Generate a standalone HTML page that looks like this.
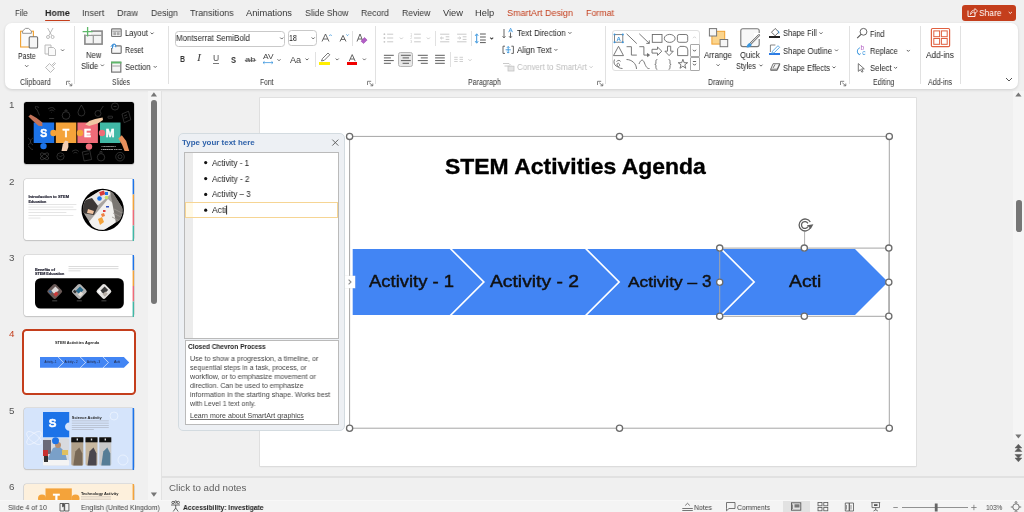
<!DOCTYPE html><html><head><meta charset="utf-8"><style>html,body{margin:0;padding:0;width:1024px;height:512px;overflow:hidden;background:#f0f0f0;position:relative;font-family:"Liberation Sans",sans-serif}svg{overflow:visible}</style></head><body><div style="position:absolute;left:14.6px;top:9.33px;font-family:'Liberation Sans',sans-serif;font-size:9.3px;line-height:1;white-space:pre;will-change:transform;color:#363636;font-weight:400;transform:scaleX(0.8475);transform-origin:0 0;">File</div><div style="position:absolute;left:45px;top:9.33px;font-family:'Liberation Sans',sans-serif;font-size:9.3px;line-height:1;white-space:pre;will-change:transform;color:#242424;font-weight:700;transform:scaleX(0.9557);transform-origin:0 0;">Home</div><div style="position:absolute;left:82.2px;top:9.33px;font-family:'Liberation Sans',sans-serif;font-size:9.3px;line-height:1;white-space:pre;will-change:transform;color:#363636;font-weight:400;transform:scaleX(0.9585);transform-origin:0 0;">Insert</div><div style="position:absolute;left:117px;top:9.33px;font-family:'Liberation Sans',sans-serif;font-size:9.3px;line-height:1;white-space:pre;will-change:transform;color:#363636;font-weight:400;transform:scaleX(0.9676);transform-origin:0 0;">Draw</div><div style="position:absolute;left:151px;top:9.33px;font-family:'Liberation Sans',sans-serif;font-size:9.3px;line-height:1;white-space:pre;will-change:transform;color:#363636;font-weight:400;transform:scaleX(0.9325);transform-origin:0 0;">Design</div><div style="position:absolute;left:190.4px;top:9.33px;font-family:'Liberation Sans',sans-serif;font-size:9.3px;line-height:1;white-space:pre;will-change:transform;color:#363636;font-weight:400;transform:scaleX(0.9662);transform-origin:0 0;">Transitions</div><div style="position:absolute;left:246.3px;top:9.33px;font-family:'Liberation Sans',sans-serif;font-size:9.3px;line-height:1;white-space:pre;will-change:transform;color:#363636;font-weight:400;transform:scaleX(0.9935);transform-origin:0 0;">Animations</div><div style="position:absolute;left:304.5px;top:9.33px;font-family:'Liberation Sans',sans-serif;font-size:9.3px;line-height:1;white-space:pre;will-change:transform;color:#363636;font-weight:400;transform:scaleX(0.9352);transform-origin:0 0;">Slide Show</div><div style="position:absolute;left:361px;top:9.33px;font-family:'Liberation Sans',sans-serif;font-size:9.3px;line-height:1;white-space:pre;will-change:transform;color:#363636;font-weight:400;transform:scaleX(0.9338);transform-origin:0 0;">Record</div><div style="position:absolute;left:402px;top:9.33px;font-family:'Liberation Sans',sans-serif;font-size:9.3px;line-height:1;white-space:pre;will-change:transform;color:#363636;font-weight:400;transform:scaleX(0.9316);transform-origin:0 0;">Review</div><div style="position:absolute;left:443px;top:9.33px;font-family:'Liberation Sans',sans-serif;font-size:9.3px;line-height:1;white-space:pre;will-change:transform;color:#363636;font-weight:400;transform:scaleX(1.0008);transform-origin:0 0;">View</div><div style="position:absolute;left:475px;top:9.33px;font-family:'Liberation Sans',sans-serif;font-size:9.3px;line-height:1;white-space:pre;will-change:transform;color:#363636;font-weight:400;transform:scaleX(0.9935);transform-origin:0 0;">Help</div><div style="position:absolute;left:507px;top:9.33px;font-family:'Liberation Sans',sans-serif;font-size:9.3px;line-height:1;white-space:pre;will-change:transform;color:#c43e1c;font-weight:400;transform:scaleX(0.9677);transform-origin:0 0;">SmartArt Design</div><div style="position:absolute;left:586px;top:9.33px;font-family:'Liberation Sans',sans-serif;font-size:9.3px;line-height:1;white-space:pre;will-change:transform;color:#c43e1c;font-weight:400;transform:scaleX(0.9507);transform-origin:0 0;">Format</div><div style="position:absolute;left:45px;top:19.6px;width:25px;height:1.7px;background:#c43e1c;border-radius:1px"></div><div style="position:absolute;left:962px;top:5px;width:54px;height:16px;background:#c43e1c;border-radius:3px"></div><div style="position:absolute;left:978.5px;top:7.96px;font-family:'Liberation Sans',sans-serif;font-size:9.5px;line-height:1;white-space:pre;will-change:transform;color:#ffffff;font-weight:400;transform:scaleX(0.8872);transform-origin:0 0;">Share</div><svg style="position:absolute;left:0px;top:0px;" width="1024" height="30" viewBox="0 0 1024 30"><path d="M968 10.5v6h7v-3.5" fill="none" stroke="#fff" stroke-width="0.9"/><path d="M970.5 14.5c0-3 2-4.5 4.5-4.5V8.5l2.5 2.5-2.5 2.5V12c-2 0-3.5.8-4.5 2.5z" fill="none" stroke="#fff" stroke-width="0.8"/><path d="M1008.7 12l1.6 1.5 1.6-1.5" fill="none" stroke="#fff" stroke-width="0.9"/></svg><div style="position:absolute;left:5px;top:23px;width:1013px;height:66px;background:#fff;border-radius:7px;box-shadow:0 1px 3px rgba(0,0,0,0.14)"></div><svg style="position:absolute;left:0px;top:0px;" width="1024" height="100" viewBox="0 0 1024 100"><rect x="20.6" y="31.2" width="12.8" height="15.8" fill="#fafafa" stroke="#f0a030" stroke-width="1.1"/><path d="M22.6 33.3L22.6 31L25.5 28.4L28.5 28.4L31.4 31L31.4 33.3Z" fill="#fff" stroke="#8a8a8a" stroke-width="0.9"/><rect x="29.2" y="36.7" width="8.4" height="11.3" rx="1" fill="#f6f6f6" stroke="#6e6e6e" stroke-width="1.1"/><path d="M25.099999999999998 65.2L26.7 66.8L28.3 65.2" fill="none" stroke="#555" stroke-width="0.9"/><g fill="none" stroke="#b4b4b4" stroke-width="0.9"><circle cx="48" cy="37" r="1.5"/><circle cx="52.6" cy="37" r="1.5"/><path d="M48.8 35.7L53 28M51.8 35.7L47.6 28"/></g><g fill="#fafafa" stroke="#b4b4b4" stroke-width="0.9"><path d="M45 45h6v9h-6z"/><path d="M48.5 47.5h5l2 2v6h-7z"/></g><path d="M61.1 49.45L62.6 50.95L64.1 49.45" fill="none" stroke="#555" stroke-width="0.9"/><g fill="#fafafa" stroke="#b4b4b4" stroke-width="0.9"><path d="M45.5 67.5l4-4 5 5-4 4z"/><path d="M51.5 65.5l3-3 1 1-3 3"/></g><g fill="none" stroke="#666" stroke-width="0.8"><path d="M66.5 85V81.3h3.7"/><path d="M68.3 82.8l3.5 3M71.8 83.5v2.3h-2.3"/></g><g fill="#f4f4f4" stroke="#888" stroke-width="1.6"><rect x="84.9" y="31.1" width="17.2" height="13"/></g><path d="M85 35.3h17M93.3 35.3v9" stroke="#9a9a9a" stroke-width="1.2"/><rect x="82" y="29.5" width="9" height="5" fill="#fff"/><path d="M82.6 31.6h10M87.6 27v9.6" stroke="#5fb86a" stroke-width="1.3"/><path d="M100.9 64.55L102.4 66.05L103.9 64.55" fill="none" stroke="#555" stroke-width="0.9"/><rect x="111.6" y="28.9" width="9.6" height="7.6" rx="0.8" fill="#f6f6f6" stroke="#777" stroke-width="1.2"/><path d="M112.5 31.2h8" stroke="#888" stroke-width="0.9"/><rect x="113.3" y="32.2" width="2.8" height="3" fill="#aaa"/><rect x="116.8" y="32.2" width="2.8" height="3" fill="#aaa"/><path d="M150.6 32.55L152.1 34.05L153.6 32.55" fill="none" stroke="#555" stroke-width="0.9"/><rect x="111.6" y="45.8" width="9.6" height="7.6" rx="0.8" fill="#f6f6f6" stroke="#777" stroke-width="1.2"/><rect x="110.5" y="44" width="5" height="4" fill="#fff"/><path d="M112.5 48.5v-2.8a1.6 1.6 0 0 1 3.2 0v1.5" fill="none" stroke="#3c8fd8" stroke-width="1.1"/><path d="M110.8 46.8l1.7-2 1.7 2" fill="none" stroke="#3c8fd8" stroke-width="1"/><rect x="111.6" y="62.3" width="9.2" height="9.8" fill="#f6f6f6" stroke="#777" stroke-width="1.2"/><rect x="111" y="61.6" width="10.4" height="1.9" fill="#5fb86a"/><path d="M112.3 66h8" stroke="#999" stroke-width="0.9"/><path d="M153.7 66.05L155.2 67.55L156.7 66.05" fill="none" stroke="#555" stroke-width="0.9"/></svg><div style="position:absolute;left:18.4px;top:51.92px;font-family:'Liberation Sans',sans-serif;font-size:8.6px;line-height:1;white-space:pre;will-change:transform;color:#222;font-weight:400;transform:scaleX(0.8006);transform-origin:0 0;">Paste</div><div style="position:absolute;left:85.6px;top:50.92px;font-family:'Liberation Sans',sans-serif;font-size:8.6px;line-height:1;white-space:pre;will-change:transform;color:#222;font-weight:400;transform:scaleX(0.8894);transform-origin:0 0;">New</div><div style="position:absolute;left:80.5px;top:61.52px;font-family:'Liberation Sans',sans-serif;font-size:8.6px;line-height:1;white-space:pre;will-change:transform;color:#222;font-weight:400;transform:scaleX(0.9053);transform-origin:0 0;">Slide</div><div style="position:absolute;left:124.7px;top:29.02px;font-family:'Liberation Sans',sans-serif;font-size:8.6px;line-height:1;white-space:pre;will-change:transform;color:#222;font-weight:400;transform:scaleX(0.8872);transform-origin:0 0;">Layout</div><div style="position:absolute;left:124.7px;top:46.22px;font-family:'Liberation Sans',sans-serif;font-size:8.6px;line-height:1;white-space:pre;will-change:transform;color:#222;font-weight:400;transform:scaleX(0.8150);transform-origin:0 0;">Reset</div><div style="position:absolute;left:124.7px;top:63.02px;font-family:'Liberation Sans',sans-serif;font-size:8.6px;line-height:1;white-space:pre;will-change:transform;color:#222;font-weight:400;transform:scaleX(0.8929);transform-origin:0 0;">Section</div><div style="position:absolute;left:174.5px;top:30.5px;width:110.9px;height:16px;box-sizing:border-box;border:1px solid #c9c9c9;border-radius:3.5px;background:#fff"></div><div style="position:absolute;left:287.6px;top:30.3px;width:29.4px;height:16px;box-sizing:border-box;border:1px solid #c9c9c9;border-radius:3.5px;background:#fff"></div><div style="position:absolute;left:176.4px;top:34.44px;font-family:'Liberation Sans',sans-serif;font-size:8.7px;line-height:1;white-space:pre;will-change:transform;color:#222;font-weight:400;transform:scaleX(0.9109);transform-origin:0 0;">Montserrat SemiBold</div><div style="position:absolute;left:289.2px;top:34.24px;font-family:'Liberation Sans',sans-serif;font-size:8.7px;line-height:1;white-space:pre;will-change:transform;color:#222;font-weight:400;transform:scaleX(0.8168);transform-origin:0 0;">18</div><div style="position:absolute;left:352.4px;top:30.7px;width:0.8px;height:15px;background:#e1e1e1"></div><div style="position:absolute;left:179.8px;top:54.34px;font-family:'Liberation Sans',sans-serif;font-size:9.4px;line-height:1;white-space:pre;will-change:transform;color:#333;font-weight:700;transform:scaleX(0.7373);transform-origin:0 0;">B</div><div style="position:absolute;left:197.3px;top:54.34px;font-family:'Liberation Serif',serif;font-size:9.4px;line-height:1;white-space:pre;will-change:transform;color:#444;font-weight:400;transform:scaleX(1.2800);transform-origin:0 0;font-style:italic;">I</div><div style="position:absolute;left:212.8px;top:54.38px;font-family:'Liberation Sans',sans-serif;font-size:9px;line-height:1;white-space:pre;will-change:transform;color:#444;font-weight:400;transform:scaleX(0.9231);transform-origin:0 0;">U</div><div style="position:absolute;left:230.6px;top:54.54px;font-family:'Liberation Sans',sans-serif;font-size:9.4px;line-height:1;white-space:pre;will-change:transform;color:#333;font-weight:700;transform:scaleX(0.7980);transform-origin:0 0;">S</div><div style="position:absolute;left:245.2px;top:56.15px;font-family:'Liberation Sans',sans-serif;font-size:7.5px;line-height:1;white-space:pre;will-change:transform;color:#444;font-weight:400;transform:scaleX(1.2584);transform-origin:0 0;">ab</div><div style="position:absolute;left:262.6px;top:53.43px;font-family:'Liberation Sans',sans-serif;font-size:8px;line-height:1;white-space:pre;will-change:transform;color:#444;font-weight:400;transform:scaleX(1.0419);transform-origin:0 0;">AV</div><div style="position:absolute;left:290.1px;top:55.72px;font-family:'Liberation Sans',sans-serif;font-size:8.6px;line-height:1;white-space:pre;will-change:transform;color:#444;font-weight:400;transform:scaleX(1.0651);transform-origin:0 0;">Aa</div><div style="position:absolute;left:315.4px;top:52.2px;width:0.8px;height:15px;background:#e1e1e1"></div><div style="position:absolute;left:319.2px;top:62.1px;width:10.9px;height:2.8px;background:#ffee00"></div><div style="position:absolute;left:346.8px;top:62.1px;width:10.3px;height:2.8px;background:#f00000"></div><div style="position:absolute;left:435.4px;top:30.7px;width:0.8px;height:15px;background:#e1e1e1"></div><div style="position:absolute;left:471.4px;top:30.7px;width:0.8px;height:15px;background:#e1e1e1"></div><div style="position:absolute;left:398.2px;top:51.5px;width:15.2px;height:15.8px;box-sizing:border-box;border:1px solid #b5b5b5;border-radius:2.5px;background:#e8e8e8"></div><div style="position:absolute;left:449.5px;top:52.4px;width:0.8px;height:14.6px;background:#e1e1e1"></div><div style="position:absolute;left:516.5px;top:29.02px;font-family:'Liberation Sans',sans-serif;font-size:8.6px;line-height:1;white-space:pre;will-change:transform;color:#222;font-weight:400;transform:scaleX(0.9335);transform-origin:0 0;">Text Direction</div><div style="position:absolute;left:516.5px;top:46.02px;font-family:'Liberation Sans',sans-serif;font-size:8.6px;line-height:1;white-space:pre;will-change:transform;color:#222;font-weight:400;transform:scaleX(0.9324);transform-origin:0 0;">Align Text</div><div style="position:absolute;left:516.5px;top:63.12px;font-family:'Liberation Sans',sans-serif;font-size:8.6px;line-height:1;white-space:pre;will-change:transform;color:#bdbdbd;font-weight:400;transform:scaleX(0.9218);transform-origin:0 0;">Convert to SmartArt</div><div style="position:absolute;left:611.9px;top:30.4px;width:87.7px;height:41px;box-sizing:border-box;border:1px solid #e0e0e0;border-radius:3px;background:#fff"></div><div style="position:absolute;left:689.5px;top:44px;width:10.1px;height:13px;box-sizing:border-box;border:1px solid #a8a8a8;border-radius:1px;background:#fff"></div><div style="position:absolute;left:689.5px;top:57.2px;width:10.1px;height:14.2px;box-sizing:border-box;border:1px solid #a8a8a8;border-radius:1px;background:#fff"></div><div style="position:absolute;left:704.1px;top:51.12px;font-family:'Liberation Sans',sans-serif;font-size:8.6px;line-height:1;white-space:pre;will-change:transform;color:#222;font-weight:400;transform:scaleX(0.9124);transform-origin:0 0;">Arrange</div><div style="position:absolute;left:740.4px;top:51.42px;font-family:'Liberation Sans',sans-serif;font-size:8.6px;line-height:1;white-space:pre;will-change:transform;color:#222;font-weight:400;transform:scaleX(0.8922);transform-origin:0 0;">Quick</div><div style="position:absolute;left:736.1px;top:62.02px;font-family:'Liberation Sans',sans-serif;font-size:8.6px;line-height:1;white-space:pre;will-change:transform;color:#222;font-weight:400;transform:scaleX(0.8502);transform-origin:0 0;">Styles</div><div style="position:absolute;left:769.1px;top:36.2px;width:10.6px;height:1.9px;background:#222"></div><div style="position:absolute;left:769.1px;top:53px;width:10.6px;height:2px;background:#2c7be5"></div><div style="position:absolute;left:782.7px;top:29.12px;font-family:'Liberation Sans',sans-serif;font-size:8.6px;line-height:1;white-space:pre;will-change:transform;color:#222;font-weight:400;transform:scaleX(0.8818);transform-origin:0 0;">Shape Fill</div><div style="position:absolute;left:782.7px;top:46.52px;font-family:'Liberation Sans',sans-serif;font-size:8.6px;line-height:1;white-space:pre;will-change:transform;color:#222;font-weight:400;transform:scaleX(0.8996);transform-origin:0 0;">Shape Outline</div><div style="position:absolute;left:782.7px;top:63.52px;font-family:'Liberation Sans',sans-serif;font-size:8.6px;line-height:1;white-space:pre;will-change:transform;color:#222;font-weight:400;transform:scaleX(0.8808);transform-origin:0 0;">Shape Effects</div><div style="position:absolute;left:870px;top:29.92px;font-family:'Liberation Sans',sans-serif;font-size:8.6px;line-height:1;white-space:pre;will-change:transform;color:#222;font-weight:400;transform:scaleX(0.8553);transform-origin:0 0;">Find</div><div style="position:absolute;left:870px;top:46.92px;font-family:'Liberation Sans',sans-serif;font-size:8.6px;line-height:1;white-space:pre;will-change:transform;color:#222;font-weight:400;transform:scaleX(0.8817);transform-origin:0 0;">Replace</div><div style="position:absolute;left:870px;top:63.92px;font-family:'Liberation Sans',sans-serif;font-size:8.6px;line-height:1;white-space:pre;will-change:transform;color:#222;font-weight:400;transform:scaleX(0.9041);transform-origin:0 0;">Select</div><div style="position:absolute;left:926.3px;top:51.32px;font-family:'Liberation Sans',sans-serif;font-size:8.6px;line-height:1;white-space:pre;will-change:transform;color:#222;font-weight:400;transform:scaleX(0.9574);transform-origin:0 0;">Add-ins</div><svg style="position:absolute;left:0px;top:0px;" width="1024" height="100" viewBox="0 0 1024 100"><path d="M280.2 37.55L281.7 39.05L283.2 37.55" fill="none" stroke="#555" stroke-width="0.9"/><path d="M311.7 37.45L313.2 38.95L314.7 37.45" fill="none" stroke="#555" stroke-width="0.9"/><path d="M322 41.5L325.5 34L329 41.5M323.2 39h4.6" fill="none" stroke="#555" stroke-width="0.9"/><path d="M329.4 35.8l1.1-1.1 1.1 1.1" fill="none" stroke="#3a96dd" stroke-width="0.9"/><path d="M340 41.5L343 35.4L346 41.5M341 39.4h4" fill="none" stroke="#555" stroke-width="0.9"/><path d="M346.4 34.5l1.1 1.1 1.1-1.1" fill="none" stroke="#3a96dd" stroke-width="0.9"/><path d="M357 41.5L360 34L363 41.5M358 39h4" fill="none" stroke="#555" stroke-width="0.9"/><path d="M361 41.2l3.5-3.7 2.6 2.5-3.5 3.5z" fill="#b25fc4" stroke="#a04ab5" stroke-width="0.6"/><path d="M213 63.5h6" stroke="#555" stroke-width="0.8"/><path d="M244.8 60.3h11.4" stroke="#555" stroke-width="0.8"/><path d="M263 62.6h10M264.5 61.4l-1.5 1.2 1.5 1.2M271.5 61.4l1.5 1.2-1.5 1.2" fill="none" stroke="#3a96dd" stroke-width="0.8"/><path d="M277.5 59.25L279 60.75L280.5 59.25" fill="none" stroke="#555" stroke-width="0.9"/><path d="M305.5 58.55L307 60.05L308.5 58.55" fill="none" stroke="#555" stroke-width="0.9"/><path d="M321.5 61l1-2.5 5.5-5.5 1.8 1.8-5.5 5.5z" fill="#fff" stroke="#555" stroke-width="0.8"/><path d="M335.7 58.55L337.2 60.05L338.7 58.55" fill="none" stroke="#555" stroke-width="0.9"/><path d="M349.2 61.2L352.2 54.6L355.2 61.2M350.3 59h3.8" fill="none" stroke="#555" stroke-width="0.9"/><path d="M362.9 58.55L364.4 60.05L365.9 58.55" fill="none" stroke="#555" stroke-width="0.9"/><g fill="none" stroke="#666" stroke-width="0.8"><path d="M367.5 85V81.3h3.7"/><path d="M369.3 82.8l3.5 3M372.8 83.5v2.3h-2.3"/></g><circle cx="384.4" cy="34.2" r="0.9" fill="#c4c4c4"/><path d="M387.1 34.2h6.1" stroke="#c4c4c4" stroke-width="0.9"/><path d="M414.1 34.2h6.7" stroke="#c4c4c4" stroke-width="0.9"/><circle cx="384.4" cy="38" r="0.9" fill="#c4c4c4"/><path d="M387.1 38h6.1" stroke="#c4c4c4" stroke-width="0.9"/><path d="M414.1 38h6.7" stroke="#c4c4c4" stroke-width="0.9"/><circle cx="384.4" cy="41.8" r="0.9" fill="#c4c4c4"/><path d="M387.1 41.8h6.1" stroke="#c4c4c4" stroke-width="0.9"/><path d="M414.1 41.8h6.7" stroke="#c4c4c4" stroke-width="0.9"/><g font-size="3.4" fill="#c4c4c4" font-family="Liberation Sans"><text x="410.3" y="35.5">1</text><text x="410.3" y="39.3">2</text><text x="410.3" y="43.1">3</text></g><path d="M399.9 37.55L401.4 39.05L402.9 37.55" fill="none" stroke="#c4c4c4" stroke-width="0.9"/><path d="M426.9 37.55L428.4 39.05L429.9 37.55" fill="none" stroke="#c4c4c4" stroke-width="0.9"/><path d="M440.1 34.2h9.2M445.7 36.8h3.6M445.7 39.4h3.6M440.1 41.8h9.2M440.5 38h3.3M441.8 36.8l-1.3 1.2 1.3 1.2" fill="none" stroke="#c4c4c4" stroke-width="0.9"/><path d="M457.1 34.2h9.4M462.7 36.8h3.8M462.7 39.4h3.8M457.1 41.8h9.4M457.5 38h3.3M459.5 36.8l1.3 1.2-1.3 1.2" fill="none" stroke="#c4c4c4" stroke-width="0.9"/><path d="M480 34h5.8M480 37h5.8M480 40h5.8M480 42.6h5.8" stroke="#5a5a5a" stroke-width="1"/><path d="M476.7 34.5v8M475.2 35.8l1.5-2 1.5 2M475.2 41.2l1.5 2 1.5-2" fill="none" stroke="#3a96dd" stroke-width="1"/><path d="M490.2 37.55L491.7 39.05L493.2 37.55" fill="none" stroke="#444" stroke-width="1.1"/><path d="M383.9 55.3H393.8" stroke="#5c5c5c" stroke-width="1"/><path d="M383.9 57.9H390.9" stroke="#5c5c5c" stroke-width="1"/><path d="M383.9 60.6H393.8" stroke="#5c5c5c" stroke-width="1"/><path d="M383.9 63.3H390.9" stroke="#5c5c5c" stroke-width="1"/><path d="M400.9 55.3H410.8" stroke="#5c5c5c" stroke-width="1"/><path d="M402.6 57.9H409" stroke="#5c5c5c" stroke-width="1"/><path d="M400.9 60.6H410.8" stroke="#5c5c5c" stroke-width="1"/><path d="M402.6 63.3H409" stroke="#5c5c5c" stroke-width="1"/><path d="M417.8 55.3H427.8" stroke="#5c5c5c" stroke-width="1"/><path d="M420.8 57.9H427.8" stroke="#5c5c5c" stroke-width="1"/><path d="M417.8 60.6H427.8" stroke="#5c5c5c" stroke-width="1"/><path d="M420.8 63.3H427.8" stroke="#5c5c5c" stroke-width="1"/><path d="M435.1 55.3H444.8" stroke="#5c5c5c" stroke-width="1"/><path d="M435.1 57.9H444.8" stroke="#5c5c5c" stroke-width="1"/><path d="M435.1 60.6H444.8" stroke="#5c5c5c" stroke-width="1"/><path d="M435.1 63.3H444.8" stroke="#5c5c5c" stroke-width="1"/><path d="M454.2 57.3h3.5M459.5 57.3h3.5M454.2 59.4h3.5M459.5 59.4h3.5M454.2 61.5h3.5M459.5 61.5h3.5" stroke="#c4c4c4" stroke-width="0.8"/><path d="M468.5 59.25L470 60.75L471.5 59.25" fill="none" stroke="#c4c4c4" stroke-width="0.9"/><path d="M504 29v8.5M502.6 36.3l1.4 1.6 1.4-1.6M510.5 32.5v5M509.1 36.3l1.4 1.6 1.4-1.6" fill="none" stroke="#555" stroke-width="0.9"/><path d="M508.7 32.2l1.9-4 1.9 4M509.4 30.9h2.4" fill="none" stroke="#3a96dd" stroke-width="0.8"/><path d="M568.4 32.15L569.9 33.65L571.4 32.15" fill="none" stroke="#555" stroke-width="0.9"/><path d="M505 46.2h-2v7.2h2M511.4 46.2h2v7.2h-2" fill="none" stroke="#555" stroke-width="0.9"/><path d="M508.2 46.5v6.6M506.9 47.8l1.3-1.3 1.3 1.3M506.9 51.8l1.3 1.3 1.3-1.3M505.6 49.8h5.2" fill="none" stroke="#3a96dd" stroke-width="0.9"/><path d="M554.4 49.05L555.9 50.55L557.4 49.05" fill="none" stroke="#555" stroke-width="0.9"/><path d="M503 63.5h6l2 2M504.5 66h5.5" fill="none" stroke="#c4c4c4" stroke-width="0.9"/><rect x="508" y="66.2" width="6" height="4.8" fill="#e4e4e4" stroke="#c4c4c4" stroke-width="0.8"/><path d="M589.6 66.25L591.1 67.75L592.6 66.25" fill="none" stroke="#c4c4c4" stroke-width="0.9"/><g fill="none" stroke="#666" stroke-width="0.8"><path d="M597.5 85V81.3h3.7"/><path d="M599.3 82.8l3.5 3M602.8 83.5v2.3h-2.3"/></g><path d="M693 38.2L694.5 36.7L696 38.2" fill="none" stroke="#cfcfcf" stroke-width="0.9"/><path d="M693.0 49.75L694.5 51.25L696.0 49.75" fill="none" stroke="#444" stroke-width="0.9"/><path d="M692.9 61.5h3.2" stroke="#444" stroke-width="0.8"/><path d="M693.0 63.75L694.5 65.25L696.0 63.75" fill="none" stroke="#444" stroke-width="0.9"/><g fill="none" stroke="#6a6a6a" stroke-width="0.9"><rect x="614.5" y="34.6" width="8.3" height="7.6" stroke="#777"/><path d="M626.6 33.8L636.8 43.6M639.3 33.8L649.3 43.4M646.3 43.4h3v-3"/><rect x="652.3" y="34.5" width="9.7" height="7.8"/><ellipse cx="669.7" cy="38.4" rx="5.4" ry="4"/><rect x="677.4" y="34.5" width="10.3" height="7.8" rx="1.8"/><path d="M618.5 46.3L623.5 55.6H613.5Z"/><path d="M626.6 46.7h4.8v8.4h5.4"/><path d="M639.3 46.7h4.6v8.4h4"/><path d="M647.5 53.6l2 1.5-2 1.5z" fill="#6a6a6a"/><path d="M652 49.3h5.5v-2.3l4.3 4.2-4.3 4.2v-2.3H652z"/><path d="M667.5 46.2h3.2v5h2.6l-4.2 4.4-4.2-4.4h2.6z"/><path d="M677.6 48.8l2.3-2.4h4.3a3.5 3.5 0 0 1 3.6 3.5v5.7h-10.2z"/><path d="M614.5 59.5c-1 2.5-.5 5 1.5 6.5 2 1.5 4 .5 3.5-1.5-.5-2-3-1.5-2.5.5.5 2.5 3 3.5 5.5 3.5M616.5 61.5c1.5-1.5 3.5-1.5 4 0"/><path d="M626.5 59.5c5 0 10 4 10 9.5"/><path d="M639 64c2-5 4-5 5.5-1 1.5 4 3 6 5 5.5"/><path d="M657.3 59.5c-1.2 0-1.4.7-1.4 2v1.6c0 1-.4 1.3-1.1 1.3.7 0 1.1.3 1.1 1.3v1.6c0 1.3.2 2 1.4 2"/><path d="M668.6 59.5c1.2 0 1.4.7 1.4 2v1.6c0 1 .4 1.3 1.1 1.3-.7 0-1.1.3-1.1 1.3v1.6c0 1.3-.2 2-1.4 2"/><path d="M682.9 59.3l1.2 3.4h3.5l-2.8 2.1 1 3.5-2.9-2.1-2.9 2.1 1-3.5-2.8-2.1h3.5z"/></g><g fill="#3a96dd"><rect x="613.5" y="33.6" width="2" height="2" rx="1"/><rect x="621.8" y="33.6" width="2" height="2" rx="1"/><rect x="613.5" y="41.2" width="2" height="2" rx="1"/><rect x="621.8" y="41.2" width="2" height="2" rx="1"/></g><text x="616.4" y="40.6" font-size="6" font-weight="700" fill="#3a96dd" font-family="Liberation Sans">A</text><rect x="711.9" y="31.3" width="12.8" height="12.8" fill="#fbd48c" stroke="#f0a030" stroke-width="1"/><rect x="709.4" y="28.6" width="7.2" height="7.4" fill="#f6f6f6" stroke="#777" stroke-width="1"/><rect x="720.1" y="39.5" width="7.6" height="7.2" fill="#f6f6f6" stroke="#777" stroke-width="1"/><path d="M716.6 64.35L718.1 65.85L719.6 64.35" fill="none" stroke="#555" stroke-width="0.9"/><rect x="740.8" y="28.7" width="18.4" height="17.9" rx="2" fill="#f7f7f7" stroke="#777" stroke-width="1.1"/><rect x="754" y="33" width="6" height="6" fill="#fff"/><path d="M759 35.3L750.5 43.8" stroke="#555" stroke-width="2.2" stroke-linecap="round"/><path d="M759 35.3L750.5 43.8" stroke="#fff" stroke-width="1" stroke-linecap="round"/><path d="M746.4 47.3c.5-2.2 1.6-4 3.5-4.4l1.8 1.8c-.6 2-2.6 3-5.3 2.6z" fill="#3a96dd"/><path d="M759.5 64.65L761 66.15L762.5 64.65" fill="none" stroke="#555" stroke-width="0.9"/><path d="M771.5 32.2l3.7-3.7 3.6 3.6-3.7 3.7z" fill="#fff" stroke="#444" stroke-width="0.8"/><path d="M777.8 30.5c1 .8 1.3 2 1 3" fill="none" stroke="#3a96dd" stroke-width="1"/><path d="M770.4 52V45h5" fill="none" stroke="#666" stroke-width="0.8"/><path d="M772.5 51.2l5.5-5.5 1.6 1.6-5.5 5.5-2.2.6z" fill="#fff" stroke="#3a96dd" stroke-width="0.8"/><path d="M770.7 69.2l2.4-5.5h6.5l-2.4 5.5z" fill="#f6f6f6" stroke="#555" stroke-width="0.8"/><path d="M770.7 69.2v1.2h6.5l2.4-5.5v-1.2M773 68l2-3.5" fill="none" stroke="#555" stroke-width="0.8"/><path d="M819.5 32.35L821 33.85L822.5 32.35" fill="none" stroke="#555" stroke-width="0.9"/><path d="M835.0 49.55L836.5 51.05L838.0 49.55" fill="none" stroke="#555" stroke-width="0.9"/><path d="M832.5 66.55L834 68.05L835.5 66.55" fill="none" stroke="#555" stroke-width="0.9"/><g fill="none" stroke="#666" stroke-width="0.8"><path d="M840.5 85V81.3h3.7"/><path d="M842.3 82.8l3.5 3M845.8 83.5v2.3h-2.3"/></g><circle cx="863.5" cy="31.8" r="3.4" fill="none" stroke="#555" stroke-width="0.9"/><path d="M861 34.4L857.2 38.2" stroke="#555" stroke-width="1.1"/><text x="860.4" y="50" font-size="6.6" fill="#b25fc4" font-family="Liberation Sans">b</text><text x="862.2" y="55.4" font-size="6.6" fill="#3a96dd" font-family="Liberation Sans">c</text><path d="M859.8 47.8c-2.8 1-3.4 5-.6 6.8M858 53.2l1.2 1.4 1.5-1" fill="none" stroke="#3a96dd" stroke-width="1"/><path d="M906.8 49.95L908.3 51.45L909.8 49.95" fill="none" stroke="#555" stroke-width="0.9"/><path d="M858.3 63.6v7.8l2-1.8 1.6 2.6 1.2-.7-1.5-2.6h2.7z" fill="#fff" stroke="#555" stroke-width="0.8"/><path d="M894.1 66.95L895.6 68.45L897.1 66.95" fill="none" stroke="#555" stroke-width="0.9"/><rect x="931.4" y="28.5" width="18.2" height="18.2" rx="1.2" fill="none" stroke="#e06040" stroke-width="1.2"/><g fill="none" stroke="#e06040" stroke-width="1"><rect x="933.8" y="30.9" width="5.8" height="5.8"/><rect x="941.4" y="30.9" width="5.8" height="5.8"/><rect x="933.8" y="38.5" width="5.8" height="5.8"/><rect x="941.4" y="38.5" width="5.8" height="5.8"/></g><path d="M1006 78l3 3 3-3" fill="none" stroke="#555" stroke-width="1"/></svg><div style="position:absolute;left:73.8px;top:26px;width:1px;height:58px;background:#e1e1e1"></div><div style="position:absolute;left:167.8px;top:26px;width:1px;height:58px;background:#e1e1e1"></div><div style="position:absolute;left:375px;top:26px;width:1px;height:58px;background:#e1e1e1"></div><div style="position:absolute;left:604.5px;top:26px;width:1px;height:58px;background:#e1e1e1"></div><div style="position:absolute;left:848.6px;top:26px;width:1px;height:58px;background:#e1e1e1"></div><div style="position:absolute;left:920px;top:26px;width:1px;height:58px;background:#e1e1e1"></div><div style="position:absolute;left:960.4px;top:26px;width:1px;height:58px;background:#e1e1e1"></div><div style="position:absolute;left:19.7px;top:78.37px;font-family:'Liberation Sans',sans-serif;font-size:8.3px;line-height:1;white-space:pre;will-change:transform;color:#333;font-weight:400;transform:scaleX(0.8644);transform-origin:0 0;">Clipboard</div><div style="position:absolute;left:112px;top:78.37px;font-family:'Liberation Sans',sans-serif;font-size:8.3px;line-height:1;white-space:pre;will-change:transform;color:#333;font-weight:400;transform:scaleX(0.7961);transform-origin:0 0;">Slides</div><div style="position:absolute;left:259.7px;top:78.37px;font-family:'Liberation Sans',sans-serif;font-size:8.3px;line-height:1;white-space:pre;will-change:transform;color:#333;font-weight:400;transform:scaleX(0.8128);transform-origin:0 0;">Font</div><div style="position:absolute;left:468px;top:78.37px;font-family:'Liberation Sans',sans-serif;font-size:8.3px;line-height:1;white-space:pre;will-change:transform;color:#333;font-weight:400;transform:scaleX(0.8465);transform-origin:0 0;">Paragraph</div><div style="position:absolute;left:708px;top:78.37px;font-family:'Liberation Sans',sans-serif;font-size:8.3px;line-height:1;white-space:pre;will-change:transform;color:#333;font-weight:400;transform:scaleX(0.8411);transform-origin:0 0;">Drawing</div><div style="position:absolute;left:873px;top:78.37px;font-family:'Liberation Sans',sans-serif;font-size:8.3px;line-height:1;white-space:pre;will-change:transform;color:#333;font-weight:400;transform:scaleX(0.8394);transform-origin:0 0;">Editing</div><div style="position:absolute;left:928px;top:78.37px;font-family:'Liberation Sans',sans-serif;font-size:8.3px;line-height:1;white-space:pre;will-change:transform;color:#333;font-weight:400;transform:scaleX(0.8529);transform-origin:0 0;">Add-ins</div><div style="position:absolute;left:148px;top:91px;width:13px;height:409px;background:#f5f5f5"></div><div style="position:absolute;left:161px;top:91px;width:1px;height:409px;background:#e2e2e2"></div><svg style="position:absolute;left:0px;top:0px;" width="170" height="512" viewBox="0 0 170 512"><path d="M150.8 96.6L153.9 92.3L157 96.6Z" fill="#767676"/><path d="M150.8 492.5L153.9 496.8L157 492.5Z" fill="#767676"/></svg><div style="position:absolute;left:150.8px;top:100.1px;width:6.3px;height:203.7px;background:#767676;border-radius:3.2px"></div><div style="position:absolute;left:8.6px;top:100.40px;font-family:'Liberation Sans',sans-serif;font-size:9.8px;line-height:1;white-space:pre;will-change:transform;color:#555;font-weight:400;transform:scaleX(0.9169);transform-origin:0 0;">1</div><div style="position:absolute;left:8.6px;top:176.50px;font-family:'Liberation Sans',sans-serif;font-size:9.8px;line-height:1;white-space:pre;will-change:transform;color:#555;font-weight:400;transform:scaleX(0.9169);transform-origin:0 0;">2</div><div style="position:absolute;left:8.6px;top:252.60px;font-family:'Liberation Sans',sans-serif;font-size:9.8px;line-height:1;white-space:pre;will-change:transform;color:#555;font-weight:400;transform:scaleX(0.9169);transform-origin:0 0;">3</div><div style="position:absolute;left:8.6px;top:328.90px;font-family:'Liberation Sans',sans-serif;font-size:9.8px;line-height:1;white-space:pre;will-change:transform;color:#c43e1c;font-weight:400;transform:scaleX(0.9169);transform-origin:0 0;">4</div><div style="position:absolute;left:8.6px;top:405.50px;font-family:'Liberation Sans',sans-serif;font-size:9.8px;line-height:1;white-space:pre;will-change:transform;color:#555;font-weight:400;transform:scaleX(0.9169);transform-origin:0 0;">5</div><div style="position:absolute;left:8.6px;top:481.60px;font-family:'Liberation Sans',sans-serif;font-size:9.8px;line-height:1;white-space:pre;will-change:transform;color:#555;font-weight:400;transform:scaleX(0.9169);transform-origin:0 0;">6</div><div style="position:absolute;left:24px;top:102.4px;width:110px;height:61.8px;background:#000;border-radius:2.5px;box-shadow:0 0 0 0.6px rgba(0,0,0,0.16),0 1px 1.5px rgba(0,0,0,0.12);overflow:hidden"></div><svg style="position:absolute;left:24px;top:102.4px;border-radius:2.5px" width="110" height="61.8" viewBox="0 0 110 61.8"><g fill="none" stroke="#5a5a5a" stroke-width="0.5"><path d="M12 4c-1 1-1 3 1 3.5L15.5 13.4M12.5 4.5l2.5 1"/><path d="M24 7c3-2 6-2 7 1M25.5 8.8c2-1.2 3.5-1.2 4.5.5M27.3 10.3l.6.3"/><circle cx="42" cy="13.5" r="3.8"/><path d="M41 9.5v-1.5h2v1.5"/><path d="M57.4 3.1c-2 3.5-3.4 6-3.4 7.5a3.4 3.4 0 0 0 6.8 0c0-1.5-1.4-4-3.4-7.5z"/><circle cx="74" cy="11.5" r="3"/><path d="M76 9l3.3-5"/><circle cx="91" cy="4.5" r="3.6"/><path d="M89.5 4.5h3M91 3v.1M91 6v.1"/><rect x="84" y="14.2" width="4.5" height="2" rx="0.4"/><path d="M98 12l6.5-2.8 2.3 8.5-6.6 3z"/><path d="M100 14l3-1.2M100.6 16.3l3-1.2"/><path d="M4 36c4 2 1 5 5 7M9 36c-4 2-1 5-5 7M4 44c4 2 1 3 5 3.5"/><ellipse cx="20.5" cy="54.3" rx="4.8" ry="2" transform="rotate(35 20.5 54.3)"/><ellipse cx="20.5" cy="54.3" rx="4.8" ry="2" transform="rotate(-35 20.5 54.3)"/><circle cx="36.5" cy="54.4" r="3.6"/><path d="M35 53.5l1.5 1.5 2-2"/><path d="M48 49.5c2.5-2 5-2 6.8 0M49.5 51.2c1.5-1 2.5-1 3.8 0"/><path d="M58.3 50l7.5-1.5 1.8 9-7.5 1.5z"/><path d="M60.5 52.5l4.5-.8"/><circle cx="77" cy="55.3" r="3.7"/><path d="M76 51.6v-2h2v2"/><circle cx="96" cy="54.7" r="4.3"/><circle cx="96" cy="54.7" r="2"/></g><text x="25.3" y="16.8" font-size="1.9" fill="#888" font-family="Liberation Sans">Rules</text><rect x="9.7" y="20.5" width="20.5" height="20.5" fill="#1c73e8"/><rect x="31.8" y="20.5" width="20.5" height="20.5" fill="#f4a33a"/><rect x="53.4" y="20.5" width="20.5" height="20.5" fill="#ef6b78"/><rect x="76" y="20.5" width="20.5" height="20.5" fill="#40b8a6"/><circle cx="19.5" cy="44.1" r="3.2" fill="#1c73e8"/><circle cx="29.5" cy="31" r="3.2" fill="#f4a33a"/><circle cx="56" cy="31" r="3.2" fill="#f4a33a"/><circle cx="65" cy="44.6" r="3.2" fill="#ef6b78"/><circle cx="78" cy="31" r="3.2" fill="#ef6b78"/><g fill="#fff" stroke="#fff" stroke-width="0.5" font-family="Liberation Sans" font-weight="700" font-size="10.5" text-anchor="middle"><text x="19.8" y="35.3">S</text><text x="42" y="35.3">T</text><text x="63.6" y="35.3">E</text><text x="86.2" y="35.3">M</text></g><path d="M4.4 14.5l2.2-1.9 6 3.4 5.8 4.5 0 3.8-4-.5-5-4.6z" fill="#c27258"/><path d="M61.2 22.5l4-3.5 6-2 7.4-1.6.4 2.6-4.8 3.2-5 1.6-4 1.2z" fill="#f1c7a2"/><path d="M37.5 48.9l1.2-6.5 2.6-3.8 3 .8.1 5.6-1.5 3.9z" fill="#f3cdb0"/><path d="M94.3 36.5l3.5-3.3 4.4 5.8 3 9.9h-4.6l-2.6-6.3z" fill="#e8905c"/><g fill="#f2f2f2" font-family="Liberation Sans" font-weight="700" font-size="2.1"><text x="77.2" y="44.8" textLength="15" lengthAdjust="spacingAndGlyphs">ACTIVITY</text><text x="77.2" y="47.6" textLength="20.5" lengthAdjust="spacingAndGlyphs">LESSON PLAN</text></g></svg><div style="position:absolute;left:24px;top:178.5px;width:110px;height:61.8px;background:#fff;border-radius:2.5px;box-shadow:0 0 0 0.6px rgba(0,0,0,0.16),0 1px 1.5px rgba(0,0,0,0.12);overflow:hidden"></div><svg style="position:absolute;left:24px;top:178.5px;" width="110" height="61.8" viewBox="0 0 110 61.8"><rect x="108.6" y="0" width="1.4" height="15.5" fill="#1c73e8"/><rect x="108.6" y="15.5" width="1.4" height="15.5" fill="#f4a33a"/><rect x="108.6" y="31" width="1.4" height="15.5" fill="#ef6b78"/><rect x="108.6" y="46.5" width="1.4" height="15.5" fill="#40b8a6"/><g fill="#1e1e2e" stroke="#1e1e2e" stroke-width="0.15" font-family="Liberation Sans" font-weight="700" font-size="3.7"><text x="4.4" y="19.4" textLength="40.7" lengthAdjust="spacingAndGlyphs">Introduction to STEM</text><text x="4.4" y="23.6" textLength="18" lengthAdjust="spacingAndGlyphs">Education</text></g><rect x="4.4" y="25.0" width="48" height="0.6" fill="#d4d4d4"/><rect x="4.4" y="27.75" width="45" height="0.6" fill="#d4d4d4"/><rect x="4.4" y="30.5" width="48" height="0.6" fill="#d4d4d4"/><rect x="4.4" y="33.25" width="38" height="0.6" fill="#d4d4d4"/><rect x="4.4" y="36.0" width="45" height="0.6" fill="#d4d4d4"/><rect x="4.4" y="38.75" width="12" height="0.6" fill="#d4d4d4"/><defs><clipPath id="c2"><circle cx="78.7" cy="30.9" r="19.8"/></clipPath><clipPath id="c2b"><rect x="61" y="13.2" width="35.4" height="35.4" transform="rotate(-32 78.7 30.9)"/></clipPath></defs><circle cx="78.7" cy="30.9" r="21.2" fill="#000"/><g clip-path="url(#c2)"><g clip-path="url(#c2b)"><rect x="55" y="8" width="48" height="46" fill="#a8a4a0"/><path d="M58 10l22-4 8 8-16 14-14-4z" fill="#e8e6e4"/><path d="M58 22l10-3 6 8-4 9-12-2z" fill="#3c3836"/><path d="M64 44l20-24 16 14-20 22z" fill="#f2f1ef"/><path d="M86 12l16 8v30l-10-6z" fill="#7a7672"/><path d="M90 30l8 4M89 34l8 4M88 38l8 4" stroke="#9a9690" stroke-width="0.8"/><rect x="76" y="12" width="5" height="4" fill="#d63a3a" transform="rotate(-20 79 15)"/><circle cx="75.5" cy="19.5" r="2.3" fill="#1c73e8"/><circle cx="82.5" cy="18.5" r="1.8" fill="#c8e06a"/><rect x="81" y="13" width="3" height="3" fill="#1c73e8"/><path d="M74 40l4-2 2 5-4 3z" fill="#f4a33a"/><path d="M77 35l3-1 1 3-3 1z" fill="#f08040"/><rect x="79" y="31" width="2.5" height="2" fill="#e04040"/><rect x="82" y="27" width="3" height="1.5" fill="#3050c0"/><path d="M64 30l6 2-1 3-6-1z" fill="#f2c4a0"/></g></g></svg><div style="position:absolute;left:24px;top:254.6px;width:110px;height:61.8px;background:#fff;border-radius:2.5px;box-shadow:0 0 0 0.6px rgba(0,0,0,0.16),0 1px 1.5px rgba(0,0,0,0.12);overflow:hidden"></div><svg style="position:absolute;left:24px;top:254.6px;" width="110" height="61.8" viewBox="0 0 110 61.8"><rect x="108.6" y="0" width="1.4" height="15.5" fill="#1c73e8"/><rect x="108.6" y="15.5" width="1.4" height="15.5" fill="#f4a33a"/><rect x="108.6" y="31" width="1.4" height="15.5" fill="#ef6b78"/><rect x="108.6" y="46.5" width="1.4" height="15.5" fill="#40b8a6"/><g fill="#1a1a2a" stroke="#1a1a2a" stroke-width="0.15" font-family="Liberation Sans" font-weight="700" font-size="3.8"><text x="11" y="15.6" textLength="20" lengthAdjust="spacingAndGlyphs">Benefits of</text><text x="11" y="20" textLength="29.4" lengthAdjust="spacingAndGlyphs">STEM Education</text></g><rect x="44.5" y="11.4" width="50" height="0.6" fill="#c4c4c4"/><rect x="44.5" y="13.5" width="50" height="0.6" fill="#c4c4c4"/><rect x="44.5" y="15.600000000000001" width="12" height="0.6" fill="#c4c4c4"/><rect x="11" y="23.2" width="88.8" height="30.4" rx="5.5" fill="#000"/><g transform="translate(30.7 36.4) rotate(45)"><rect x="-5.8" y="-5.8" width="11.6" height="11.6" rx="2" fill="#6a5a58"/><rect x="-3" y="-4" width="5" height="6" fill="#e0dcdc"/><rect x="1" y="-1" width="3.5" height="4" fill="#c83a3a"/><rect x="-4.5" y="2" width="3" height="2.5" fill="#3a6a9a"/></g><rect x="28.2" y="45.6" width="5" height="0.6" fill="#777"/><g transform="translate(55.3 36.4) rotate(45)"><rect x="-5.8" y="-5.8" width="11.6" height="11.6" rx="2" fill="#b4b4b4"/><rect x="-3" y="-4" width="5" height="6" fill="#2a6a8a"/><rect x="1" y="-1" width="3.5" height="4" fill="#e8e0d8"/><rect x="-4.5" y="2" width="3" height="2.5" fill="#333"/></g><rect x="52.8" y="45.6" width="5" height="0.6" fill="#777"/><g transform="translate(79.9 36.4) rotate(45)"><rect x="-5.8" y="-5.8" width="11.6" height="11.6" rx="2" fill="#e4e2e0"/><rect x="-3" y="-4" width="5" height="6" fill="#3a3a3a"/><rect x="1" y="-1" width="3.5" height="4" fill="#b8b0a8"/><rect x="-4.5" y="2" width="3" height="2.5" fill="#fff"/></g><rect x="77.4" y="45.6" width="5" height="0.6" fill="#777"/></svg><div style="position:absolute;left:22px;top:328.9px;width:114.3px;height:65.9px;box-sizing:border-box;border:2px solid #c43e1c;border-radius:4.5px;background:#fff"></div><svg style="position:absolute;left:24px;top:330.9px;" width="110" height="61.8" viewBox="0 0 110 61.8"><text x="31" y="13.2" font-size="3.6" font-weight="700" fill="#222" font-family="Liberation Sans" textLength="44.3" lengthAdjust="spacingAndGlyphs">STEM Activities Agenda</text><path d="M16 26.1h17.9l5.35 5.35-5.35 5.35H16z" fill="#4285f4"/><path d="M34.5 26.1H56l5.35 5.35-5.35 5.35H34.5l5.35-5.35z" fill="#4285f4"/><path d="M56.6 26.1H78.8l5.35 5.35-5.35 5.35H56.6l5.35-5.35z" fill="#4285f4"/><path d="M79.4 26.1H99.9l5.35 5.35-5.35 5.35H79.4l5.35-5.35z" fill="#4285f4"/><text x="20.5" y="32.45" font-size="2.6" fill="#223" font-family="Liberation Sans" textLength="12" lengthAdjust="spacingAndGlyphs">Activity - 1</text><text x="40.5" y="32.45" font-size="2.6" fill="#223" font-family="Liberation Sans" textLength="13" lengthAdjust="spacingAndGlyphs">Activity - 2</text><text x="63" y="32.45" font-size="2.6" fill="#223" font-family="Liberation Sans" textLength="13" lengthAdjust="spacingAndGlyphs">Activity - 3</text><text x="90" y="32.45" font-size="2.6" fill="#223" font-family="Liberation Sans" textLength="6" lengthAdjust="spacingAndGlyphs">Acti</text></svg><div style="position:absolute;left:24px;top:407.5px;width:110px;height:61.8px;background:#d5e4fb;border-radius:2.5px;box-shadow:0 0 0 0.6px rgba(0,0,0,0.16),0 1px 1.5px rgba(0,0,0,0.12);overflow:hidden"></div><svg style="position:absolute;left:24px;top:407.5px;" width="110" height="61.8" viewBox="0 0 110 61.8"><rect x="108.6" y="0" width="1.5" height="62" fill="#1c73e8"/><g fill="none" stroke="#f4f8ff" stroke-width="0.6"><ellipse cx="10" cy="30" rx="9" ry="4" transform="rotate(40 10 30)"/><ellipse cx="10" cy="30" rx="9" ry="4" transform="rotate(-40 10 30)"/><circle cx="90" cy="8" r="4"/><circle cx="99" cy="52" r="5"/></g><rect x="19" y="30.3" width="26.2" height="27.2" rx="2" fill="#d8dade"/><rect x="19" y="32" width="8" height="14" fill="#6a6a78"/><path d="M24 50l5-10 6-2 6 6 2 8-18 2z" fill="#7aa0c8"/><circle cx="34" cy="37" r="3" fill="#b89070"/><rect x="19" y="42" width="5" height="6" fill="#c83030"/><rect x="38" y="42" width="6" height="5" fill="#e0c060"/><rect x="19" y="52" width="26.2" height="5.5" rx="1" fill="#f4f4f4"/><rect x="20" y="48" width="4" height="6" fill="#333"/><path d="M19 4h26.2v10.5a4 4 0 0 0 0 8.3v6.5H19z" fill="#1c73e8"/><circle cx="31.5" cy="32.8" r="3.5" fill="#1c73e8"/><text x="24.8" y="18.8" font-size="11.5" font-weight="700" fill="#fff" stroke="#fff" stroke-width="0.5" font-family="Liberation Sans">S</text><text x="47.8" y="10.8" font-size="3.3" font-weight="700" fill="#222" font-family="Liberation Sans" textLength="30" lengthAdjust="spacingAndGlyphs">Science Activity</text><rect x="47.8" y="12.6" width="37" height="0.6" fill="#aab0bc"/><rect x="47.8" y="14.8" width="37" height="0.6" fill="#aab0bc"/><rect x="47.8" y="17.0" width="37" height="0.6" fill="#aab0bc"/><rect x="47.8" y="19.2" width="37" height="0.6" fill="#aab0bc"/><rect x="47.8" y="21.4" width="22" height="0.6" fill="#aab0bc"/><rect x="47.3" y="29.3" width="12" height="28.2" rx="1.5" fill="#b0a08a"/><rect x="47.3" y="29.3" width="12" height="5" fill="#111"/><rect x="52.599999999999994" y="30.5" width="1.4" height="2" fill="#ddd"/><path d="M49.3 57.5l2-14 4-4 3 6v12z" fill="#6a5a48" opacity="0.8"/><rect x="61.5" y="29.3" width="12" height="28.2" rx="1.5" fill="#c8b8a0"/><rect x="61.5" y="29.3" width="12" height="5" fill="#111"/><rect x="66.8" y="30.5" width="1.4" height="2" fill="#ddd"/><path d="M63.5 57.5l2-14 4-4 3 6v12z" fill="#2a2a3a" opacity="0.8"/><rect x="75.3" y="29.3" width="12" height="28.2" rx="1.5" fill="#c8c8c8"/><rect x="75.3" y="29.3" width="12" height="5" fill="#111"/><rect x="80.6" y="30.5" width="1.4" height="2" fill="#ddd"/><path d="M77.3 57.5l2-14 4-4 3 6v12z" fill="#3a6a8a" opacity="0.8"/></svg><div style="position:absolute;left:24px;top:483.6px;width:110px;height:61.8px;background:#fdf0dc;border-radius:2.5px;box-shadow:0 0 0 0.6px rgba(0,0,0,0.16),0 1px 1.5px rgba(0,0,0,0.12);overflow:hidden"></div><svg style="position:absolute;left:24px;top:483.6px;" width="110" height="61.8" viewBox="0 0 110 61.8"><rect x="108.6" y="0" width="1.5" height="62" fill="#f4a33a"/><rect x="21.5" y="4.4" width="26.3" height="20" fill="#f4a33a"/><circle cx="18" cy="14.5" r="4" fill="#f4a33a"/><circle cx="51.5" cy="14.5" r="4" fill="#f4a33a"/><text x="29" y="18" font-size="11" font-weight="700" fill="#fff" stroke="#fff" stroke-width="0.4" font-family="Liberation Sans">T</text><text x="57" y="10.8" font-size="3.3" font-weight="700" fill="#222" font-family="Liberation Sans" textLength="37.4" lengthAdjust="spacingAndGlyphs">Technology Activity</text><rect x="57" y="12.6" width="30" height="0.6" fill="#b8b0a8"/><rect x="57" y="14.8" width="30" height="0.6" fill="#b8b0a8"/><rect x="57" y="17.0" width="30" height="0.6" fill="#b8b0a8"/></svg><div style="position:absolute;left:1013px;top:91px;width:11px;height:349px;background:#f5f5f5"></div><svg style="position:absolute;left:990px;top:80px;" width="34" height="400" viewBox="0 0 34 400"><path d="M1015.3 96.6L1018.4 92.6L1021.5 96.6Z" transform="translate(-990 -80)" fill="#767676"/><path d="M1015.3 434.4L1018.4 438.4L1021.5 434.4Z" transform="translate(-990 -80)" fill="#767676"/><g transform="translate(-990 -80)" fill="#5a5a5a" stroke="#5a5a5a" stroke-width="0.5"><path d="M1015 448L1018.4 444.2L1021.8 448Z"/><path d="M1015 451.5L1018.4 447.7L1021.8 451.5Z"/><path d="M1015 454.5L1018.4 458.3L1021.8 454.5Z"/><path d="M1015 458L1018.4 461.8L1021.8 458Z"/></g></svg><div style="position:absolute;left:1016px;top:199.5px;width:5.6px;height:32.3px;background:#767676;border-radius:2.8px"></div><div style="position:absolute;left:260px;top:98px;width:656px;height:368.4px;background:#fff;box-shadow:0 0 0 0.7px #d9d9d9,0 1px 1.5px rgba(0,0,0,0.08)"></div><div style="position:absolute;left:445.2px;top:155.55px;font-family:'Liberation Sans',sans-serif;font-size:21.8px;line-height:1;white-space:pre;will-change:transform;color:#000;font-weight:700;transform:scaleX(1.0521);transform-origin:0 0;-webkit-text-stroke:0.35px #000;">STEM Activities Agenda</div><svg style="position:absolute;left:0px;top:0px;" width="1024" height="512" viewBox="0 0 1024 512"><path d="M352.7 249H449.7L482.7 282L449.7 315H352.7Z" fill="#4285f4"/><path d="M452 249H585L618 282L585 315H452L485 282Z" fill="#4285f4"/><path d="M587.3 249H720L753 282L720 315H587.3L620.3 282Z" fill="#4285f4"/><path d="M722.3 249H855L888 282L855 315H722.3L755.3 282Z" fill="#4285f4"/><rect x="349.6" y="136.4" width="539.7" height="291.8" fill="none" stroke="#a6a6a6" stroke-width="1"/><rect x="719.7" y="248.1" width="169.1" height="68.2" fill="none" stroke="#a6a6a6" stroke-width="1"/><path d="M804.6 231.5V245" stroke="#b0b0b0" stroke-width="1"/><g fill="none" stroke="#5e5e5e" stroke-width="1.3"><path d="M810.3 228a6 6 0 1 1 0-6"/><path d="M807.9 226.6a3.4 3.4 0 1 1 0-3.2"/></g><path d="M806.8 225.2l6.6-0.9-2.6 4.8z" fill="#5e5e5e"/><circle cx="349.6" cy="136.4" r="3.1" fill="#fff" stroke="#6c6c6c" stroke-width="1.3"/><circle cx="619.5" cy="136.4" r="3.1" fill="#fff" stroke="#6c6c6c" stroke-width="1.3"/><circle cx="889.3" cy="136.4" r="3.1" fill="#fff" stroke="#6c6c6c" stroke-width="1.3"/><circle cx="349.6" cy="428.2" r="3.1" fill="#fff" stroke="#6c6c6c" stroke-width="1.3"/><circle cx="619.5" cy="428.2" r="3.1" fill="#fff" stroke="#6c6c6c" stroke-width="1.3"/><circle cx="889.3" cy="428.2" r="3.1" fill="#fff" stroke="#6c6c6c" stroke-width="1.3"/><circle cx="719.7" cy="248.1" r="3.1" fill="#fff" stroke="#6c6c6c" stroke-width="1.3"/><circle cx="804.3" cy="248.1" r="3.1" fill="#fff" stroke="#6c6c6c" stroke-width="1.3"/><circle cx="888.8" cy="248.1" r="3.1" fill="#fff" stroke="#6c6c6c" stroke-width="1.3"/><circle cx="719.7" cy="282.2" r="3.1" fill="#fff" stroke="#6c6c6c" stroke-width="1.3"/><circle cx="888.8" cy="282.2" r="3.1" fill="#fff" stroke="#6c6c6c" stroke-width="1.3"/><circle cx="719.7" cy="316.3" r="3.1" fill="#fff" stroke="#6c6c6c" stroke-width="1.3"/><circle cx="804.3" cy="316.3" r="3.1" fill="#fff" stroke="#6c6c6c" stroke-width="1.3"/><circle cx="888.8" cy="316.3" r="3.1" fill="#fff" stroke="#6c6c6c" stroke-width="1.3"/></svg><div style="position:absolute;left:369.2px;top:273.55px;font-family:'Liberation Sans',sans-serif;font-size:16.6px;line-height:1;white-space:pre;will-change:transform;color:#111;font-weight:400;transform:scaleX(1.1120);transform-origin:0 0;-webkit-text-stroke:0.45px #111;">Activity - 1</div><div style="position:absolute;left:490.3px;top:273.55px;font-family:'Liberation Sans',sans-serif;font-size:16.6px;line-height:1;white-space:pre;will-change:transform;color:#111;font-weight:400;transform:scaleX(1.1616);transform-origin:0 0;-webkit-text-stroke:0.45px #111;">Activity - 2</div><div style="position:absolute;left:628.4px;top:273.90px;font-family:'Liberation Sans',sans-serif;font-size:15px;line-height:1;white-space:pre;will-change:transform;color:#111;font-weight:400;transform:scaleX(1.1497);transform-origin:0 0;-webkit-text-stroke:0.45px #111;">Activity –</div><div style="position:absolute;left:701.9px;top:272.84px;font-family:'Liberation Sans',sans-serif;font-size:17.2px;line-height:1;white-space:pre;will-change:transform;color:#111;font-weight:400;transform:scaleX(0.9830);transform-origin:0 0;-webkit-text-stroke:0.45px #111;">3</div><div style="position:absolute;left:789.4px;top:273.01px;font-family:'Liberation Sans',sans-serif;font-size:17px;line-height:1;white-space:pre;will-change:transform;color:#111;font-weight:400;transform:scaleX(1.1361);transform-origin:0 0;-webkit-text-stroke:0.45px #111;">Acti</div><div style="position:absolute;left:178.4px;top:132.7px;width:166.6px;height:298.3px;box-sizing:border-box;background:#edf0f4;border:1px solid #d3dbe0;border-radius:5px"></div><div style="position:absolute;left:181.5px;top:138.61px;font-family:'Liberation Sans',sans-serif;font-size:7.9px;line-height:1;white-space:pre;will-change:transform;color:#2f62aa;font-weight:700;transform:scaleX(1.0067);transform-origin:0 0;">Type your text here</div><svg style="position:absolute;left:0;top:0" width="400" height="160"><path d="M332.3 139.6l6 6M338.3 139.6l-6 6" stroke="#555" stroke-width="0.9"/></svg><div style="position:absolute;left:184.25px;top:152.2px;width:154.4px;height:186.5px;box-sizing:border-box;background:#fff;border:1px solid #bababa"></div><div style="position:absolute;left:185.25px;top:153.2px;width:7.25px;height:184.5px;background:#ececec"></div><div style="position:absolute;left:185.4px;top:201.5px;width:152.4px;height:16.2px;box-sizing:border-box;border:1px solid #f6d594;background:linear-gradient(90deg,#fff9e6 0,#fff9e6 7px,#fff 7px)"></div><div style="position:absolute;left:212px;top:158.64px;font-family:'Liberation Sans',sans-serif;font-size:8.7px;line-height:1;white-space:pre;will-change:transform;color:#222;font-weight:400;transform:scaleX(0.9257);transform-origin:0 0;">Activity - 1</div><div style="position:absolute;left:212px;top:174.64px;font-family:'Liberation Sans',sans-serif;font-size:8.7px;line-height:1;white-space:pre;will-change:transform;color:#222;font-weight:400;transform:scaleX(0.9332);transform-origin:0 0;">Activity - 2</div><div style="position:absolute;left:212px;top:190.44px;font-family:'Liberation Sans',sans-serif;font-size:8.7px;line-height:1;white-space:pre;will-change:transform;color:#222;font-weight:400;transform:scaleX(0.9163);transform-origin:0 0;">Activity – 3</div><div style="position:absolute;left:212px;top:206.24px;font-family:'Liberation Sans',sans-serif;font-size:8.7px;line-height:1;white-space:pre;will-change:transform;color:#222;font-weight:400;transform:scaleX(0.9666);transform-origin:0 0;">Acti</div><svg style="position:absolute;left:0;top:0" width="400" height="260"><circle cx="205.7" cy="162.6" r="1.6" fill="#111"/><circle cx="205.7" cy="178.6" r="1.6" fill="#111"/><circle cx="205.7" cy="194.4" r="1.6" fill="#111"/><circle cx="205.7" cy="210.20000000000002" r="1.6" fill="#111"/><path d="M226.6 205.5V214.5" stroke="#111" stroke-width="0.9"/></svg><div style="position:absolute;left:184.6px;top:339.7px;width:154.1px;height:84.9px;box-sizing:border-box;background:#fff;border:1px solid #bababa"></div><div style="position:absolute;left:187.6px;top:344.03px;font-family:'Liberation Sans',sans-serif;font-size:6.7px;line-height:1;white-space:pre;will-change:transform;color:#222;font-weight:700;transform:scaleX(0.9801);transform-origin:0 0;">Closed Chevron Process</div><div style="position:absolute;left:189.8px;top:354.91px;font-family:'Liberation Sans',sans-serif;font-size:7.2px;line-height:1;white-space:pre;will-change:transform;color:#444;font-weight:400;transform:scaleX(0.9866);transform-origin:0 0;">Use to show a progression, a timeline, or</div><div style="position:absolute;left:189.8px;top:363.91px;font-family:'Liberation Sans',sans-serif;font-size:7.2px;line-height:1;white-space:pre;will-change:transform;color:#444;font-weight:400;transform:scaleX(0.9704);transform-origin:0 0;">sequential steps in a task, process, or</div><div style="position:absolute;left:189.8px;top:372.91px;font-family:'Liberation Sans',sans-serif;font-size:7.2px;line-height:1;white-space:pre;will-change:transform;color:#444;font-weight:400;transform:scaleX(0.9942);transform-origin:0 0;">workflow, or to emphasize movement or</div><div style="position:absolute;left:189.8px;top:381.91px;font-family:'Liberation Sans',sans-serif;font-size:7.2px;line-height:1;white-space:pre;will-change:transform;color:#444;font-weight:400;transform:scaleX(0.9720);transform-origin:0 0;">direction. Can be used to emphasize</div><div style="position:absolute;left:189.8px;top:390.91px;font-family:'Liberation Sans',sans-serif;font-size:7.2px;line-height:1;white-space:pre;will-change:transform;color:#444;font-weight:400;transform:scaleX(0.9874);transform-origin:0 0;">information in the starting shape. Works best</div><div style="position:absolute;left:189.8px;top:399.91px;font-family:'Liberation Sans',sans-serif;font-size:7.2px;line-height:1;white-space:pre;will-change:transform;color:#444;font-weight:400;transform:scaleX(0.9606);transform-origin:0 0;">with Level 1 text only.</div><div style="position:absolute;left:190.4px;top:411.67px;font-family:'Liberation Sans',sans-serif;font-size:7px;line-height:1;white-space:pre;will-change:transform;color:#444;font-weight:400;transform:scaleX(1.0059);transform-origin:0 0;">Learn more about SmartArt graphics</div><div style="position:absolute;left:190.4px;top:418.6px;width:113.9px;height:0.7px;background:#777"></div><div style="position:absolute;left:344.8px;top:276px;width:10.6px;height:11.7px;background:#fff;box-shadow:0 0 0 0.3px #e0e0e0"></div><svg style="position:absolute;left:0;top:0" width="400" height="300"><path d="M348.6 279.6l2.4 2.4-2.4 2.4" fill="none" stroke="#8a8a8a" stroke-width="1.1"/></svg><div style="position:absolute;left:162px;top:476.2px;width:862px;height:1.4px;background:#e1e1e1"></div><div style="position:absolute;left:169px;top:484.38px;font-family:'Liberation Sans',sans-serif;font-size:9px;line-height:1;white-space:pre;will-change:transform;color:#5e5e5e;font-weight:400;transform:scaleX(1.0818);transform-origin:0 0;">Click to add notes</div><div style="position:absolute;left:0px;top:500px;width:1024px;height:12px;background:#f4f4f4"></div><div style="position:absolute;left:0px;top:500px;width:1024px;height:1px;background:#f8f8f8"></div><div style="position:absolute;left:8.1px;top:503.87px;font-family:'Liberation Sans',sans-serif;font-size:7.6px;line-height:1;white-space:pre;will-change:transform;color:#444;font-weight:400;transform:scaleX(0.9214);transform-origin:0 0;">Slide 4 of 10</div><div style="position:absolute;left:80.5px;top:503.87px;font-family:'Liberation Sans',sans-serif;font-size:7.6px;line-height:1;white-space:pre;will-change:transform;color:#444;font-weight:400;transform:scaleX(0.9151);transform-origin:0 0;">English (United Kingdom)</div><div style="position:absolute;left:182.5px;top:503.87px;font-family:'Liberation Sans',sans-serif;font-size:7.6px;line-height:1;white-space:pre;will-change:transform;color:#222;font-weight:700;transform:scaleX(0.8871);transform-origin:0 0;">Accessibility: Investigate</div><div style="position:absolute;left:694px;top:503.87px;font-family:'Liberation Sans',sans-serif;font-size:7.6px;line-height:1;white-space:pre;will-change:transform;color:#444;font-weight:400;transform:scaleX(0.9071);transform-origin:0 0;">Notes</div><div style="position:absolute;left:736.9px;top:503.87px;font-family:'Liberation Sans',sans-serif;font-size:7.6px;line-height:1;white-space:pre;will-change:transform;color:#444;font-weight:400;transform:scaleX(0.9014);transform-origin:0 0;">Comments</div><div style="position:absolute;left:986px;top:504.21px;font-family:'Liberation Sans',sans-serif;font-size:7.2px;line-height:1;white-space:pre;will-change:transform;color:#444;font-weight:400;transform:scaleX(0.8809);transform-origin:0 0;">103%</div><div style="position:absolute;left:783px;top:500.5px;width:26.5px;height:11.5px;background:#e2e2e2"></div><svg style="position:absolute;left:0px;top:0px;" width="1024" height="512" viewBox="0 0 1024 512"><path d="M60 503.5h4.2v7.5H60zM64.7 503.5h4.2v7.5h-4.2z" fill="none" stroke="#555" stroke-width="0.9"/><path d="M64.5 503.5v4l-1.2-1-1.2 1v-4" fill="#555"/><g fill="none" stroke="#444" stroke-width="0.8"><circle cx="173" cy="502.5" r="1.2"/><circle cx="175.7" cy="502" r="1.2"/><circle cx="178.3" cy="502.5" r="1.2"/><path d="M171 505h9M175.7 505v3l-2.5 3.5M175.7 508l2.5 3.5"/></g><path d="M682.3 508.5h10.5M682.3 510.5h10.5M685.2 505.5l2.3-2.2 2.3 2.2" fill="none" stroke="#555" stroke-width="0.8"/><path d="M726.5 502.5h8.5v6h-6l-2.5 2.3v-2.3z" fill="none" stroke="#555" stroke-width="0.8"/><rect x="791.5" y="502.8" width="9.3" height="7.4" fill="none" stroke="#555" stroke-width="0.9"/><rect x="794.5" y="504.3" width="5" height="3.2" fill="#777"/><path d="M792.3 504.5v4.5" stroke="#777" stroke-width="1"/><g fill="none" stroke="#555" stroke-width="0.8"><rect x="818" y="502.5" width="4" height="3.3"/><rect x="823.8" y="502.5" width="4" height="3.3"/><rect x="818" y="507.5" width="4" height="3.3"/><rect x="823.8" y="507.5" width="4" height="3.3"/></g><path d="M845.3 503h4v8h-4zM849.3 503h4.2v8h-4.2z" fill="none" stroke="#555" stroke-width="0.8"/><path d="M846.5 505v4.5M851 505v4.5" stroke="#555" stroke-width="0.6"/><path d="M871.2 502.6h9M872 502.6v5h7.5v-5M875.7 507.6v2.5M873.5 511l2.2-1.2 2.2 1.2" fill="none" stroke="#555" stroke-width="0.8"/><rect x="874" y="504.2" width="3.5" height="1.8" fill="#555"/><path d="M893.3 507.5h4.5M902 507.5h66M971.2 507.5h5.4M973.9 504.8v5.4" stroke="#777" stroke-width="0.8"/><rect x="934.8" y="503.5" width="2.8" height="8" fill="#666"/><g fill="none" stroke="#555" stroke-width="0.8"><circle cx="1016" cy="507" r="3.2"/><path d="M1016 501.8v2M1016 510.2v2M1010.8 507h2M1019.2 507h2M1014.8 502.6l1.2-1.2 1.2 1.2M1014.8 511.4l1.2 1.2 1.2-1.2"/></g></svg></body></html>
